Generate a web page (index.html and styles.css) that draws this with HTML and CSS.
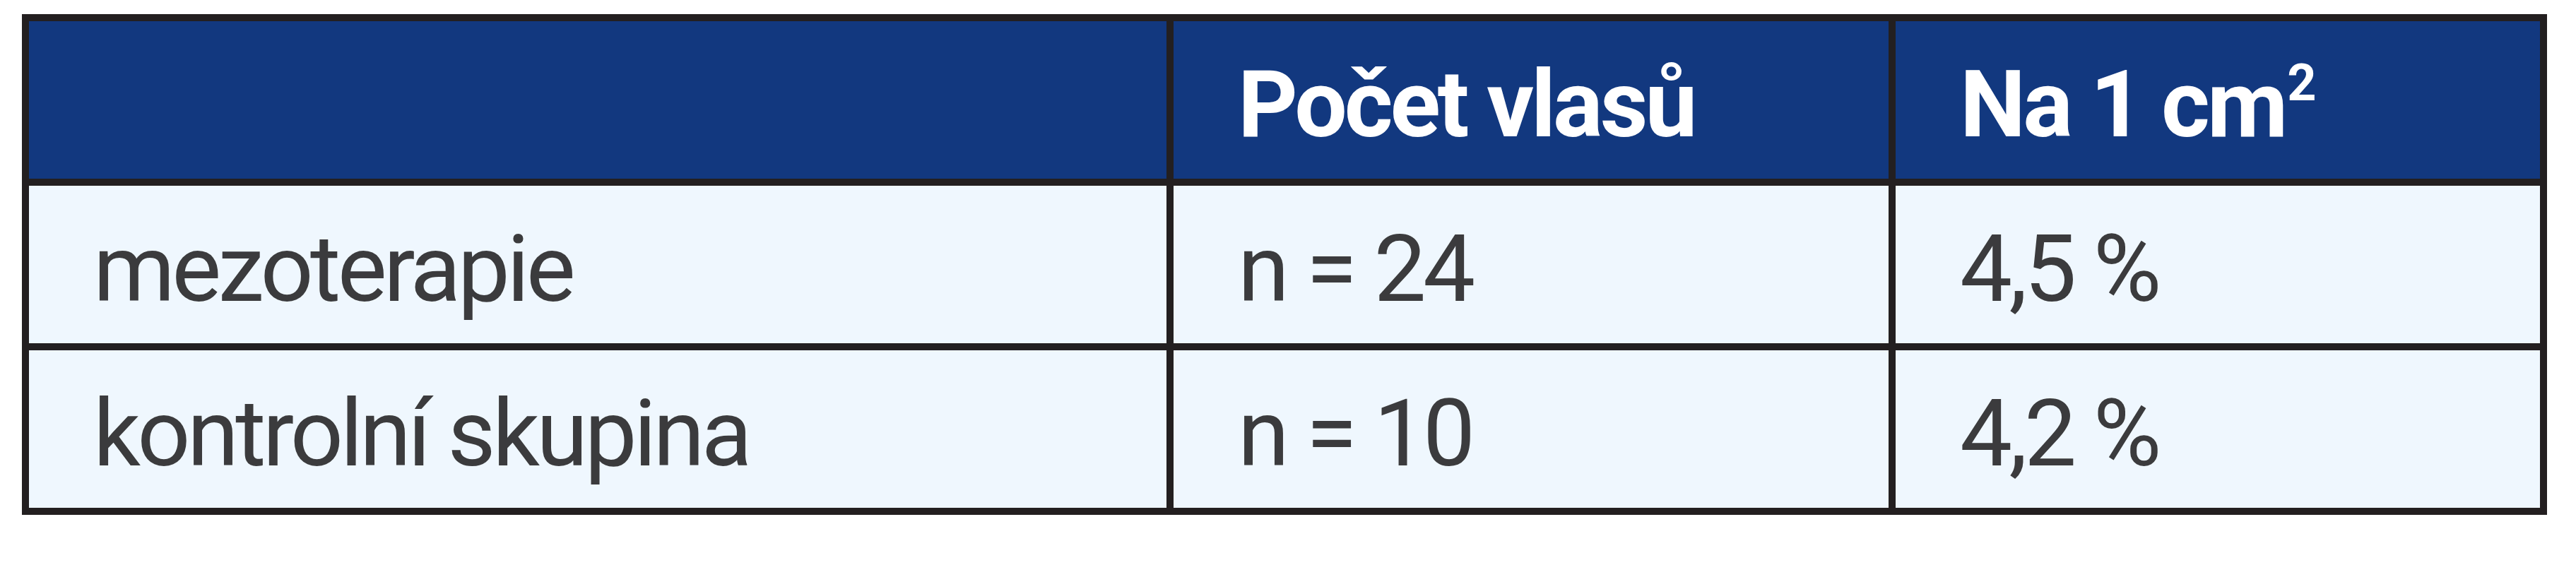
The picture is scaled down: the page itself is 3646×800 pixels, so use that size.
FILE: index.html
```html
<!DOCTYPE html>
<html lang="cs">
<head>
<meta charset="utf-8">
<title>Tabulka</title>
<link rel="stylesheet" href="styles.css">
</head>
<body>
<div class="table">
  <div class="cell head"></div>
  <div class="cell head">Počet vlasů</div>
  <div class="cell head">Na 1 cm<sup class="sup">2</sup></div>
  <div class="cell">mezoterapie</div>
  <div class="cell">n = 24</div>
  <div class="cell">4,5 %</div>
  <div class="cell">kontrolní skupina</div>
  <div class="cell">n = 10</div>
  <div class="cell">4,2 %</div>
</div>
</body>
</html>
```
FILE: styles.css
```css
html, body {
  margin: 0;
  padding: 0;
  background: #ffffff;
}
body {
  padding: 20px 0 0 31px;
}
.table {
  display: grid;
  grid-template-columns: 1610px 1012px 912px;
  grid-auto-rows: 223px;
  gap: 10px;
  padding: 10px;
  background: #231f20;
  width: max-content;
}
.cell {
  background: #eff7fe;
  color: #3b3b3d;
  font-family: Roboto, "Open Sans", sans-serif;
  font-size: 132px;
  line-height: 1;
  letter-spacing: -4.6px;
  padding: 52px 0 0 91px;
  white-space: nowrap;
  box-sizing: border-box;
}
.head {
  background: #12387f;
  color: #ffffff;
  font-weight: 700;
  letter-spacing: -4px;
}
.sup {
  font-size: 72px;
  line-height: 0;
  vertical-align: 51px;
  letter-spacing: 0;
  margin-left: 3px;
}
```
